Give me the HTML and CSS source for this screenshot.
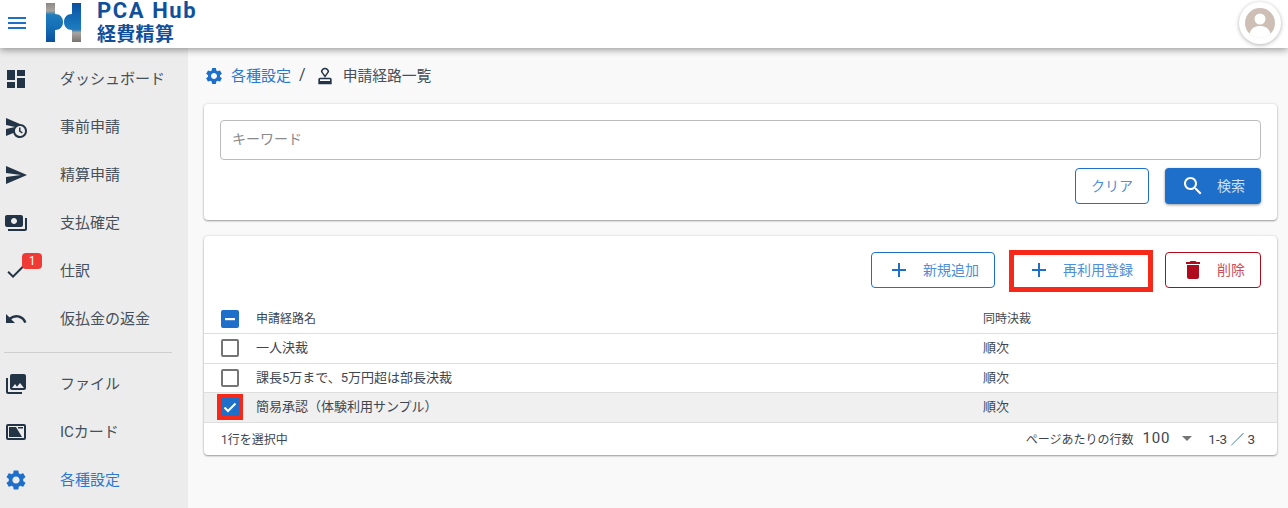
FILE: index.html
```html
<!DOCTYPE html>
<html lang="ja">
<head>
<meta charset="utf-8">
<title>申請経路一覧</title>
<link rel="stylesheet" href="styles.css">
</head>
<body>
<div class="app">
  <header class="topbar">
    <svg class="menu-icon" viewBox="0 0 24 24"><path d="M3 18h18v-2H3v2zm0-5h18v-2H3v2zm0-7v2h18V6H3z"/></svg>
    <svg class="logo-mark" viewBox="0 0 35 39">
      <defs>
        <linearGradient id="lg1" x1="0" y1="0" x2="0" y2="1"><stop offset="0" stop-color="#8d8882"/><stop offset=".2" stop-color="#a8a6a2"/><stop offset=".3" stop-color="#1f7cbd"/><stop offset=".6" stop-color="#1570b6"/><stop offset="1" stop-color="#0b4f9e"/></linearGradient>
        <linearGradient id="lg2" x1="0" y1="0" x2="0" y2="1"><stop offset="0" stop-color="#0b4f9e"/><stop offset=".45" stop-color="#1570b6"/><stop offset=".68" stop-color="#1f7cbd"/><stop offset=".76" stop-color="#a8a6a2"/><stop offset="1" stop-color="#77726d"/></linearGradient>
      </defs>
      <path fill="url(#lg1)" d="M0 0h9v11c5 0 8 3.500 8 8s-3 8-8 8v12H0z"/>
      <path fill="url(#lg2)" d="M26 0h9v39h-9V27c-5 0-8-3.500-8-8s3-8 8-8z"/>
    </svg>
    <div class="logo-text">
      <span class="logo-en">PCA Hub</span>
      <span class="logo-ja">経費精算</span>
    </div>
    <div class="avatar">
      <svg viewBox="0 0 30 30"><circle cx="15" cy="15" r="15" fill="#cdbfb6"/><circle cx="15" cy="11" r="5.500" fill="#fff"/><path fill="#fff" d="M4.500 25.700c1.500-5.500 5.500-7.700 10.500-7.700s9 2.200 10.500 7.700C22.800 28.400 19 30 15 30s-7.800-1.600-10.500-4.300z"/></svg>
    </div>
  </header>

  <div class="body-row">
    <nav class="sidebar">
      <a class="nav-item"><svg class="nav-icon" viewBox="0 0 24 24"><path d="M3 13h8V3H3v10zm0 8h8v-6H3v6zm10 0h8V11h-8v10zm0-18v6h8V3h-8z"/></svg><span>ダッシュボード</span></a>
      <a class="nav-item"><svg class="nav-icon" viewBox="0 0 24 24"><path d="M16.500 12.500H15v4l3 2 .75-1.230-2.250-1.520V12.500zM16 9 2 3v7l9 2-9 2v7l7.270-3.110C10.090 20.830 12.790 23 16 23c3.860 0 7-3.140 7-7s-3.140-7-7-7zm0 12c-2.750 0-4.980-2.220-5-4.970v-.07C11.020 13.220 13.250 11 16 11c2.760 0 5 2.240 5 5s-2.240 5-5 5z"/></svg><span>事前申請</span></a>
      <a class="nav-item"><svg class="nav-icon" viewBox="0 0 24 24"><path d="M2.010 21 23 12 2.010 3 2 10l15 2-15 2z"/></svg><span>精算申請</span></a>
      <a class="nav-item"><svg class="nav-icon" viewBox="0 0 24 24"><path d="M19 14V6c0-1.100-.9-2-2-2H3c-1.100 0-2 .9-2 2v8c0 1.100.9 2 2 2h14c1.100 0 2-.9 2-2zm-9-1c-1.660 0-3-1.340-3-3s1.340-3 3-3 3 1.340 3 3-1.340 3-3 3zm13-6v11c0 1.100-.9 2-2 2H4v-2h17V7h2z"/></svg><span>支払確定</span></a>
      <a class="nav-item"><svg class="nav-icon" viewBox="0 0 24 24"><path d="M9 16.170 4.830 12l-1.420 1.410L9 19 21 7l-1.410-1.410z"/></svg><b class="badge">1</b><span>仕訳</span></a>
      <a class="nav-item"><svg class="nav-icon" viewBox="0 0 24 24"><path d="M12.500 8c-2.650 0-5.050.99-6.900 2.600L2 7v9h9l-3.620-3.620c1.390-1.160 3.160-1.880 5.120-1.880 3.540 0 6.550 2.310 7.600 5.500l2.370-.78C21.080 11.030 17.150 8 12.500 8z"/></svg><span>仮払金の返金</span></a>
      <hr class="nav-divider">
      <a class="nav-item"><svg class="nav-icon" viewBox="0 0 24 24"><path d="M22 16V4c0-1.100-.9-2-2-2H8c-1.100 0-2 .9-2 2v12c0 1.100.9 2 2 2h12c1.100 0 2-.9 2-2zm-11-4 2.030 2.710L16 11l4 5H8l3-4zM2 6v14c0 1.100.9 2 2 2h14v-2H4V6H2z"/></svg><span>ファイル</span></a>
      <a class="nav-item"><svg class="nav-icon" viewBox="0 0 24 24"><path fill-rule="evenodd" d="M4 4h16a2 2 0 0 1 2 2v12a2 2 0 0 1-2 2H4a2 2 0 0 1-2-2V6a2 2 0 0 1 2-2zm0 2v12h16V6z"/><path d="M5 7h7l6 10H5zM14 7h5v1.500h-5z"/></svg><span>ICカード</span></a>
      <a class="nav-item active"><svg class="nav-icon" viewBox="0 0 24 24"><path d="M19.140 12.940c.04-.3.060-.61.060-.94 0-.32-.02-.64-.07-.94l2.030-1.580c.18-.14.230-.41.120-.61l-1.920-3.320c-.12-.22-.37-.29-.59-.22l-2.390.96c-.5-.38-1.030-.7-1.620-.94l-.36-2.540c-.04-.24-.24-.41-.48-.41h-3.840c-.24 0-.43.17-.47.41l-.36 2.540c-.59.24-1.130.57-1.620.94l-2.390-.96c-.22-.08-.47 0-.59.22L2.740 8.870c-.12.21-.08.47.12.61l2.030 1.580c-.05.3-.09.63-.09.94s.02.64.07.94l-2.030 1.580c-.18.14-.23.41-.12.61l1.920 3.320c.12.22.37.29.59.22l2.390-.96c.5.38 1.030.7 1.620.94l.36 2.540c.05.24.24.41.48.41h3.840c.24 0 .44-.17.47-.41l.36-2.540c.59-.24 1.130-.56 1.620-.94l2.390.96c.22.08.47 0 .59-.22l1.920-3.320c.12-.22.070-.47-.12-.61l-2.010-1.580zM12 15.600c-1.980 0-3.600-1.620-3.600-3.600s1.620-3.600 3.600-3.600 3.600 1.620 3.600 3.600-1.620 3.600-3.600 3.600z"/></svg><span>各種設定</span></a>
    </nav>

    <main class="content">
      <div class="breadcrumb">
        <svg class="crumb-icon blue" viewBox="0 0 24 24"><path d="M19.140 12.940c.04-.3.060-.61.060-.94 0-.32-.02-.64-.07-.94l2.030-1.580c.18-.14.230-.41.120-.61l-1.920-3.320c-.12-.22-.37-.29-.59-.22l-2.390.96c-.5-.38-1.030-.7-1.620-.94l-.36-2.540c-.04-.24-.24-.41-.48-.41h-3.840c-.24 0-.43.17-.47.41l-.36 2.540c-.59.24-1.130.57-1.620.94l-2.390-.96c-.22-.08-.47 0-.59.22L2.740 8.870c-.12.21-.08.47.12.61l2.030 1.580c-.05.3-.09.63-.09.94s.02.64.07.94l-2.030 1.580c-.18.14-.23.41-.12.61l1.920 3.320c.12.22.37.29.59.22l2.390-.96c.5.38 1.030.7 1.620.94l.36 2.540c.05.24.24.41.48.41h3.840c.24 0 .44-.17.47-.41l.36-2.540c.59-.24 1.130-.56 1.620-.94l2.390.96c.22.08.47 0 .59-.22l1.920-3.320c.12-.22.070-.47-.12-.61l-2.010-1.580zM12 15.600c-1.980 0-3.600-1.620-3.600-3.600s1.620-3.600 3.600-3.600 3.600 1.620 3.600 3.600-1.620 3.600-3.600 3.600z"/></svg>
        <a class="crumb-link">各種設定</a>
        <span class="crumb-sep">/</span>
        <svg class="crumb-icon dark" viewBox="0 0 24 24"><path d="M4 16v6h16v-6c0-1.100-.9-2-2-2H6c-1.100 0-2 .9-2 2zm14 2H6v-2h12v2zM12 2C9.240 2 7 4.240 7 7l5 7 5-7c0-2.760-2.240-5-5-5zm0 9L9 7c0-1.660 1.340-3 3-3s3 1.340 3 3l-3 4z"/></svg>
        <span class="crumb-current">申請経路一覧</span>
      </div>

      <section class="card search-card">
        <input class="keyword" type="text" placeholder="キーワード">
        <div class="actions">
          <button class="btn outline clear-btn"><span>クリア</span></button>
          <button class="btn solid search-btn"><svg viewBox="0 0 24 24"><path d="M15.500 14h-.79l-.28-.27C15.410 12.590 16 11.110 16 9.500 16 5.910 13.090 3 9.500 3S3 5.910 3 9.500 5.910 16 9.500 16c1.610 0 3.090-.59 4.230-1.570l.27.28v.79l5 4.990L20.490 19l-4.990-5zm-6 0C7.010 14 5 11.990 5 9.500S7.010 5 9.500 5 14 7.010 14 9.500 11.990 14 9.500 14z"/></svg><span>検索</span></button>
        </div>
      </section>

      <section class="card list-card">
        <div class="actions list-actions">
          <button class="btn outline add-btn"><svg viewBox="0 0 24 24"><path d="M19 13h-6v6h-2v-6H5v-2h6V5h2v6h6v2z"/></svg><span>新規追加</span></button>
          <button class="btn outline reuse-btn"><svg viewBox="0 0 24 24"><path d="M19 13h-6v6h-2v-6H5v-2h6V5h2v6h6v2z"/></svg><span>再利用登録</span></button>
          <button class="btn danger delete-btn"><svg viewBox="0 0 24 24"><path d="M6 19c0 1.100.9 2 2 2h8c1.100 0 2-.9 2-2V7H6v12zM19 4h-3.500l-1-1h-5l-1 1H5v2h14V4z"/></svg><span>削除</span></button>
        </div>
        <div class="row head">
          <span class="check checked"><svg viewBox="0 0 18 18"><rect x="4" y="8" width="10" height="2.200" fill="#fff"/></svg></span>
          <span class="cell">申請経路名</span><span class="cell">同時決裁</span>
        </div>
        <div class="row">
          <span class="check"></span><span class="cell">一人決裁</span><span class="cell">順次</span>
        </div>
        <div class="row">
          <span class="check"></span><span class="cell">課長5万まで、5万円超は部長決裁</span><span class="cell">順次</span>
        </div>
        <div class="row selected">
          <span class="check checked marked"><svg viewBox="0 0 18 18"><path d="M3.500 9.500 7 13l7.500-7.500" fill="none" stroke="#fff" stroke-width="2"/></svg></span>
          <span class="cell">簡易承認（体験利用サンプル）</span><span class="cell">順次</span>
        </div>
        <div class="list-footer">
          <span>1行を選択中</span>
          <div class="pager">
            <span>ページあたりの行数</span>
            <span class="per-page">100</span>
            <i class="caret"></i>
            <span class="range">1-3 ／ 3</span>
          </div>
        </div>
      </section>
    </main>
  </div>
</div>
</body>
</html>
```

FILE: styles.css
```css
* { box-sizing: border-box; }
html, body { margin: 0; height: 100%; }
body {
  font-family: Roboto, "Noto Sans CJK JP", sans-serif;
  color: #3d4650;
  background: #f9f9f9;
  overflow: hidden;
}
.app { display: flex; flex-direction: column; height: 508px; }

.topbar {
  position: relative;
  z-index: 2;
  flex: 0 0 48px;
  height: 48px;
  display: flex;
  align-items: flex-start;
  padding-left: 5px;
  background: #fff;
  box-shadow: 0 2px 7px rgba(0, 0, 0, .38);
}
.menu-icon { width: 24px; height: 24px; margin-top: 11px; fill: #1e6fc9; }
.logo-mark { width: 35px; height: 39px; margin: 3px 0 0 17px; }
.logo-text { display: flex; flex-direction: column; margin-left: 16px; color: #0f4f9b; font-weight: 700; }
.logo-en { font-size: 22px; line-height: 20px; letter-spacing: 1.600px; margin-top: 1px; }
.logo-ja { font-size: 19px; line-height: 22px; letter-spacing: .3px; margin-top: 3px; }
.avatar {
  width: 42px;
  height: 42px;
  margin: 2px 7px 0 auto;
  padding: 6px;
  border-radius: 50%;
  background: #fff;
  box-shadow: 0 1px 4px rgba(0, 0, 0, .3);
}
.avatar svg { display: block; width: 30px; height: 30px; }

.body-row { flex: 1; display: flex; min-height: 0; }
.sidebar { flex: 0 0 188px; padding-top: 7px; background: #ececec; }
.nav-item {
  position: relative;
  display: flex;
  align-items: center;
  height: 48px;
  padding-left: 4px;
  font-size: 15px;
  color: #46505a;
}
.nav-item span { margin-left: 32px; padding-bottom: 3px; }
.nav-icon { width: 24px; height: 24px; fill: #233446; flex: none; }
.nav-item.active { color: #2a78cf; }
.nav-item.active .nav-icon { fill: #1e6fc9; }
.badge {
  position: absolute;
  left: 22px;
  top: 6px;
  width: 20px;
  height: 16px;
  border-radius: 4px;
  background: #f03a35;
  color: #fff;
  font-size: 12px;
  font-weight: 400;
  line-height: 16px;
  text-align: center;
}
.nav-divider { height: 1px; margin: 9px 16px 7px 4px; border: 0; background: #cfcfcf; }

.content { flex: 1; min-width: 0; padding: 16px 11px 0 16px; }
.breadcrumb { display: flex; align-items: center; height: 24px; margin-bottom: 16px; font-size: 15px; }
.breadcrumb span, .breadcrumb a { padding-bottom: 3px; }
.crumb-icon { width: 20px; height: 20px; flex: none; }
.crumb-icon.blue { fill: #1e6fc9; }
.crumb-icon.dark { fill: #233446; }
.crumb-link { margin-left: 7px; color: #2a78cf; }
.crumb-sep { margin: 0 9px 0 8px; font-size: 16px; color: #3d4650; }
.crumb-current { margin-left: 8px; color: #46505a; font-size: 14.800px; }

.card {
  background: #fff;
  border-radius: 4px;
  box-shadow: 0 1px 2px rgba(0, 0, 0, .35), 0 0 3px rgba(0, 0, 0, .12);
}
.search-card { padding: 16px; margin-bottom: 16px; }
.keyword {
  display: block;
  width: 100%;
  height: 40px;
  padding: 0 11px 2px;
  border: 1px solid #bcbcbc;
  border-radius: 4px;
  font: 14px Roboto, "Noto Sans CJK JP", sans-serif;
  outline: none;
}
.keyword::placeholder { color: #8a8a8a; opacity: 1; }
.actions { display: flex; justify-content: flex-end; gap: 16px; margin-top: 8px; }
.list-actions { margin: 0; padding: 16px 16px 16px; }

.btn {
  position: relative;
  display: flex;
  align-items: center;
  justify-content: center;
  height: 36px;
  padding: 0;
  border-radius: 4px;
  background: #fff;
  font: 14px Roboto, "Noto Sans CJK JP", sans-serif;
  color: #4d8fd8;
}
.btn span { padding-bottom: 2px; }
.btn svg { width: 24px; height: 24px; flex: none; margin-right: 12px; }
.outline { border: 1px solid #1e6fc9; }
.outline svg { fill: #1e6fc9; }
.clear-btn { width: 74px; }
.search-btn { width: 96px; }
.solid { border: 0; background: #1e6fc9; color: #cfe0f4; box-shadow: 0 1px 3px rgba(0, 0, 0, .4); }
.solid svg { fill: #fff; }
.add-btn { width: 124px; }
.reuse-btn { width: 138px; border: 0; }
.reuse-btn::after {
  content: "";
  position: absolute;
  inset: -2px -4px -4px -2px;
  border: 5px solid #f5281a;
}
.danger { border: 1px solid #b00a1e; color: #cb5060; }
.delete-btn { width: 96px; }
.danger svg { fill: #b00a1e; }

.row {
  display: grid;
  grid-template-columns: 35px 727px 1fr;
  align-items: center;
  height: 29.600px;
  padding-left: 17px;
  border-bottom: 1px solid #dedede;
  font-size: 13px;
  color: #3d4650;
}
.row.head { height: 30px; font-size: 12px; }
.row.selected { background: #f0f0f0; }
.cell { padding-bottom: 3px; }
.check {
  display: block;
  width: 18px;
  height: 18px;
  border: 2px solid #757575;
  border-radius: 2px;
}
.check.checked { border: 0; background: #1e6fc9; }
.check svg { display: block; width: 18px; height: 18px; }
.check.marked { border-radius: 0; outline: 4px solid #f5281a; }

.list-footer {
  display: flex;
  align-items: center;
  justify-content: space-between;
  height: 32px;
  padding: 0 22px 1px 17px;
  font-size: 12px;
}
.pager { display: flex; align-items: center; }
.per-page { margin-left: 9px; font-size: 15px; letter-spacing: .8px; }
.caret {
  width: 0;
  height: 0;
  margin: 1px 0 0 12px;
  border: 5px solid transparent;
  border-top-color: #757575;
  border-bottom: 0;
}
.range { margin-left: 16px; font-size: 13.500px; }
```
